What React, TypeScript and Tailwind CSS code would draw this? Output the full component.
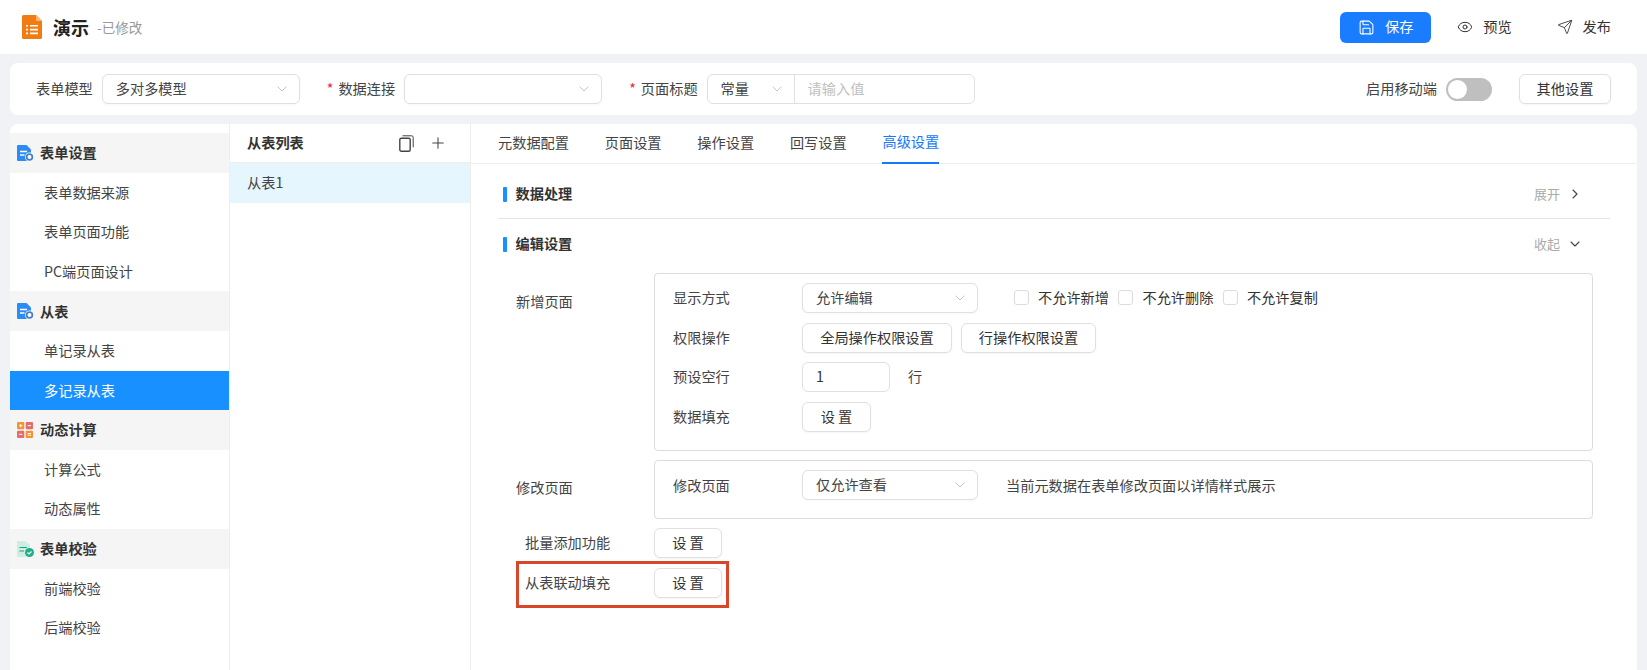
import { ChevronDown, ChevronRight, Eye, Plus, Save, Send } from "lucide-react";

function FileIcon() {
  return (
    <svg width="20" height="24" viewBox="0 0 20 24" className="shrink-0">
      <path d="M1.5 0H14l6 6v16.5a1.5 1.5 0 0 1-1.5 1.5h-17A1.5 1.5 0 0 1 0 22.500V1.500A1.500 1.500 0 0 1 1.500 0z" fill="#f07c12" />
      <path d="M14 0l6 6h-4.500A1.500 1.500 0 0 1 14 4.500z" fill="#f8b77a" />
      <path d="M4 10h2v1.600H4zM8 10h8v1.600H8zM4 13.800h2v1.600H4zM8 13.800h8v1.600H8zM4 17.600h2v1.600H4zM8 17.600h8v1.600H8z" fill="#fff" />
    </svg>
  );
}

function DocGearIcon() {
  return (
    <svg width="17" height="16" viewBox="0 0 17 16" className="shrink-0">
      <path d="M1 0h8.500L14 4.500V15a1 1 0 0 1-1 1H1a1 1 0 0 1-1-1V1a1 1 0 0 1 1-1z" fill="#2b8cf7" />
      <path d="M3 6.500h7M3 10h4.500" stroke="#fff" strokeWidth="1.300" />
      <circle cx="12.500" cy="12" r="4.500" fill="#fff" />
      <circle cx="12.500" cy="12" r="2.900" fill="none" stroke="#4a7fc4" strokeWidth="1.800" />
    </svg>
  );
}

function CalcIcon() {
  return (
    <svg width="16" height="16" viewBox="0 0 16 16" className="shrink-0">
      <rect x="0" y="0" width="7.300" height="7.300" rx="1" fill="#f59332" />
      <rect x="8.700" y="0" width="7.300" height="7.300" rx="1" fill="#e26d6d" />
      <rect x="0" y="8.700" width="7.300" height="7.300" rx="1" fill="#e26d6d" />
      <rect x="8.700" y="8.700" width="7.300" height="7.300" rx="1" fill="#f59332" />
      <path d="M2 3.650h3.300M3.650 2v3.300M10.700 3.650h3.300M2 12.350h3.300M10.700 11.500h3.300M10.700 13.200h3.300" stroke="#fff" strokeWidth="1" />
    </svg>
  );
}

function CheckDocIcon() {
  return (
    <svg width="17" height="16" viewBox="0 0 17 16" className="shrink-0">
      <path d="M0 0h8.500L13 4v12H0z" fill="#cdeee3" />
      <path d="M2.500 6.500h7.500M2.500 10h4.500" stroke="#1fa37c" strokeWidth="1.200" />
      <circle cx="12.500" cy="11.500" r="4.500" fill="#1fae85" />
      <path d="M10.500 11.500l1.500 1.500 2.500-2.500" stroke="#fff" strokeWidth="1.100" fill="none" />
    </svg>
  );
}

function CopyIcon() {
  return (
    <svg width="15" height="17" viewBox="0 0 15 17" fill="none" className="ml-auto shrink-0 text-[#444]">
      <rect x="0.800" y="3.200" width="10.400" height="13" rx="1.500" stroke="currentColor" strokeWidth="1.400" />
      <path d="M3.500 0.800h9.200a1.500 1.500 0 0 1 1.500 1.500v10" stroke="currentColor" strokeWidth="1" />
    </svg>
  );
}

const menu = [
  { title: "表单设置", icon: <DocGearIcon />, items: ["表单数据来源", "表单页面功能", "PC端页面设计"] },
  { title: "从表", icon: <DocGearIcon />, items: ["单记录从表", "多记录从表"] },
  { title: "动态计算", icon: <CalcIcon />, items: ["计算公式", "动态属性"] },
  { title: "表单校验", icon: <CheckDocIcon />, items: ["前端校验", "后端校验"] },
];

const tabs = ["元数据配置", "页面设置", "操作设置", "回写设置", "高级设置"];

function SelectBox({ value, className }: { value?: string; className: string }) {
  return (
    <div className={`flex h-[30px] items-center justify-between rounded-md border border-[#e0e0e0] bg-white pl-[13px] pr-[9px] shadow-[0_1px_2px_rgba(0,0,0,0.03)] ${className}`}>
      <span className="text-[#444]">{value}</span>
      <ChevronDown size={16} strokeWidth={1} className="text-[#a8a8a8]" />
    </div>
  );
}

function Btn({ children, className }: { children: string; className: string }) {
  return (
    <button className={`flex h-[30px] items-center justify-center rounded-md border border-[#e0e0e0] bg-white text-[#333] shadow-[0_1px_2px_rgba(0,0,0,0.04)] ${className}`}>
      {children}
    </button>
  );
}

function SetBtn({ className = "w-[68px]" }: { className?: string }) {
  return <Btn className={className}>设 置</Btn>;
}

function Check({ label }: { label: string }) {
  return (
    <label className="flex items-center">
      <span className="h-[15px] w-[15px] rounded-[3px] border border-[#dcdcdc] bg-white" />
      <span className="ml-[9px] text-[#333]">{label}</span>
    </label>
  );
}

function Section({ title, action, open }: { title: string; action: string; open?: boolean }) {
  return (
    <div className="flex h-[20px] items-center pl-[5px] pr-[27px]">
      <span className="h-[15px] w-[3.500px] rounded-[1px] bg-[#1890ff]" />
      <span className="ml-[9px] font-semibold text-[#333]">{title}</span>
      <span className="ml-auto text-[13px] text-[#aaa]">{action}</span>
      {open ? (
        <ChevronDown size={16} strokeWidth={1.700} className="ml-[7px] text-[#444]" />
      ) : (
        <ChevronRight size={16} strokeWidth={1.700} className="ml-[7px] text-[#444]" />
      )}
    </div>
  );
}

export default function App() {
  return (
    <div className="h-[670px] w-[1647px] overflow-hidden bg-[#f0f2f5] font-['Noto_Sans_CJK_SC','Liberation_Sans',sans-serif] text-[14.2px] text-[#444]">
      {/* Header */}
      <header className="flex h-[54px] items-center bg-white pl-[22px] pr-[36px]">
        <FileIcon />
        <h1 className="ml-[11px] text-[18px] font-semibold text-[#222]">演示</h1>
        <span className="ml-[8px] text-[13.500px] text-[#999]">-已修改</span>
        <button className="ml-auto flex h-[31px] w-[91px] items-center justify-center rounded-md bg-[#1a7dff] text-white">
          <Save size={17} strokeWidth={1.500} />
          <span className="ml-[10px]">保存</span>
        </button>
        <div className="ml-[26px] flex items-center text-[#333]">
          <Eye size={16} strokeWidth={1.500} />
          <span className="ml-[10px]">预览</span>
        </div>
        <div className="ml-[45px] flex items-center text-[#333]">
          <Send size={16} strokeWidth={1.300} />
          <span className="ml-[10px]">发布</span>
        </div>
      </header>

      <div className="px-[10px] pt-[9px]">
        {/* Toolbar */}
        <div className="flex h-[52px] items-center rounded-lg bg-white pl-[26px] pr-[26px]">
          <span>表单模型</span>
          <SelectBox value="多对多模型" className="ml-[9px] w-[198px]" />
          <span className="ml-[27px] text-[#f5222d]">*</span>
          <span className="ml-[5px]">数据连接</span>
          <SelectBox className="ml-[9px] w-[198px]" />
          <span className="ml-[27px] text-[#f5222d]">*</span>
          <span className="ml-[5px]">页面标题</span>
          <div className="ml-[9px] flex h-[30px] w-[268px] items-center rounded-md border border-[#e0e0e0] bg-white">
            <div className="flex h-full w-[87px] items-center justify-between border-r border-[#e0e0e0] pl-[13px] pr-[9px]">
              <span>常量</span>
              <ChevronDown size={16} strokeWidth={1} className="text-[#a8a8a8]" />
            </div>
            <span className="ml-[13px] text-[#bfbfbf]">请输入值</span>
          </div>
          <span className="ml-auto">启用移动端</span>
          <span className="ml-[9px] flex h-[23px] w-[46px] items-center rounded-full bg-[#bfbfbf] pl-[2px]">
            <span className="h-[19px] w-[19px] rounded-full bg-white" />
          </span>
          <Btn className="ml-[27px] w-[92px]">其他设置</Btn>
        </div>

        <main className="mt-[9px] flex h-[546px] rounded-t-lg bg-white">
          {/* Sidebar */}
          <aside className="w-[220px] shrink-0 border-r border-[#eeeeee] pt-[9px]">
            {menu.map((g) => (
              <div key={g.title}>
                <div className="flex h-[39.600px] items-center bg-[#f5f5f5] pl-[7px] font-semibold text-[#333]">
                  {g.icon}
                  <span className={g.icon.type === CalcIcon ? "ml-[7px]" : "ml-[6px]"}>{g.title}</span>
                </div>
                {g.items.map((item) => (
                  <div
                    key={item}
                    className={
                      item === "多记录从表"
                        ? "flex h-[39.600px] items-center bg-[#1890ff] pl-[34px] text-white"
                        : "flex h-[39.600px] items-center pl-[34px]"
                    }
                  >
                    {item}
                  </div>
                ))}
              </div>
            ))}
          </aside>

          {/* Sub table list */}
          <section className="w-[241px] shrink-0 border-r border-[#eeeeee]">
            <div className="flex h-[39px] items-center border-b border-[#eeeeee] pl-[17px] pr-[23px]">
              <span className="font-semibold text-[#333]">从表列表</span>
              <CopyIcon />
              <Plus size={18} strokeWidth={1.400} className="ml-[15px] text-[#444]" />
            </div>
            <div className="flex h-[40px] items-center bg-[#e6f6fe] pl-[17px]">从表1</div>
          </section>

          {/* Settings */}
          <section className="min-w-0 flex-1">
            <nav className="flex h-[40px] gap-[35.800px] border-b border-[#eeeeee] pl-[27px]">
              {tabs.map((t) => (
                <div
                  key={t}
                  className={
                    t === "高级设置"
                      ? "-mb-px flex h-[40px] items-center border-b-2 border-[#1677ff] pb-[2px] text-[#1677ff]"
                      : "flex h-[39px] items-center pb-[2px]"
                  }
                >
                  {t}
                </div>
              ))}
            </nav>

            <div className="mr-[27px] pl-[27px] pt-[20px]">
              <Section title="数据处理" action="展开" />
              <div className="mt-[14px] border-t border-[#e4e4e4] pt-[15px]">
                <Section title="编辑设置" action="收起" open />
              </div>

              <div className="mr-[17px] mt-[19px]">
                <div className="flex items-center">
                  <div className="w-[156px] self-start pl-[18px] pt-[18px]">新增页面</div>
                  <div className="h-[178px] flex-1 rounded-[4px] border border-[#dcdcdc] pl-[18px] pt-[9px]">
                    <div className="flex h-[30px] items-center">
                      <span className="w-[129px]">显示方式</span>
                      <SelectBox value="允许编辑" className="w-[176px]" />
                      <div className="ml-[36px] flex gap-[9.500px]">
                        <Check label="不允许新增" />
                        <Check label="不允许删除" />
                        <Check label="不允许复制" />
                      </div>
                    </div>
                    <div className="mt-[10px] flex items-center">
                      <span className="w-[129px]">权限操作</span>
                      <Btn className="w-[150px]">全局操作权限设置</Btn>
                      <Btn className="ml-[9px] w-[135px]">行操作权限设置</Btn>
                    </div>
                    <div className="mt-[9px] flex items-center">
                      <span className="w-[129px]">预设空行</span>
                      <div className="flex h-[30px] w-[88px] items-center rounded-md border border-[#e0e0e0] pl-[13px] text-[#333]">1</div>
                      <span className="ml-[18px]">行</span>
                    </div>
                    <div className="mt-[10px] flex items-center">
                      <span className="w-[129px]">数据填充</span>
                      <SetBtn className="w-[69px]" />
                    </div>
                  </div>
                </div>

                <div className="mt-[9px] flex">
                  <div className="w-[156px] pl-[18px] pt-[17px]">修改页面</div>
                  <div className="flex h-[59px] flex-1 items-start rounded-[4px] border border-[#dcdcdc] pl-[18px] pt-[9px]">
                    <span className="mt-[5px] w-[129px]">修改页面</span>
                    <SelectBox value="仅允许查看" className="w-[176px]" />
                    <span className="ml-[28px] mt-[5px]">当前元数据在表单修改页面以详情样式展示</span>
                  </div>
                </div>

                <div className="mt-[9px] flex items-center">
                  <span className="w-[156px] pl-[27px]">批量添加功能</span>
                  <SetBtn />
                </div>

                <div className="relative mt-[10px] flex items-center">
                  <span className="w-[156px] pl-[27px]">从表联动填充</span>
                  <SetBtn />
                  {/* Highlight box drawn over the row */}
                  <div className="absolute left-[18px] top-[-7px] h-[47px] w-[213px] border-[3.500px] border-[#d9472b]" />
                </div>
              </div>
            </div>
          </section>
        </main>
      </div>
    </div>
  );
}
